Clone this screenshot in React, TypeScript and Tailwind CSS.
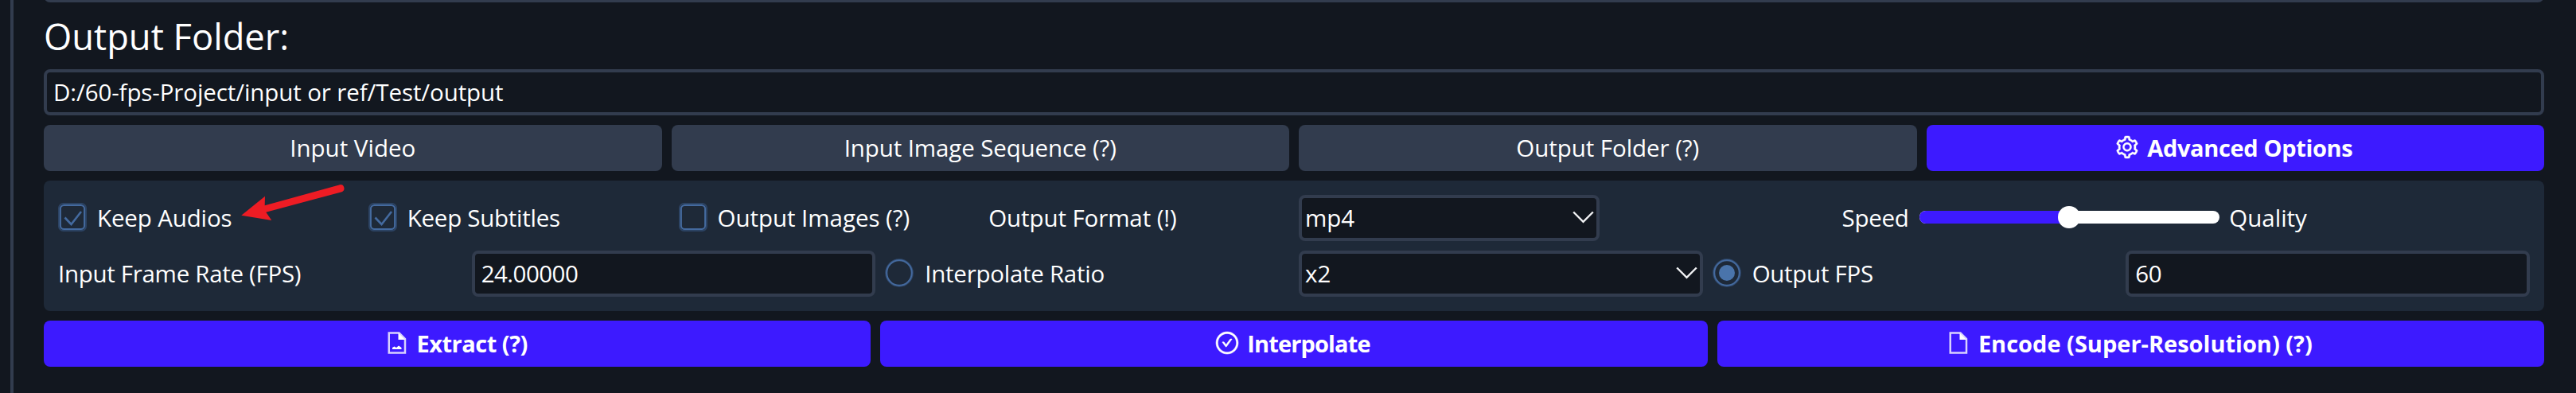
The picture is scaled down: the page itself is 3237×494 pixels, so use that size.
import type { ReactNode } from "react";
import { AiOutlineCheckCircle, AiOutlineSetting } from "react-icons/ai";

function FileIcon({ image }: { image?: boolean }) {
  return (
    <svg className="mx-1 mb-0.5 h-7 w-6 shrink-0" viewBox="0 0 24 28" fill="none">
      <path d="M1.75 1.5H14.5L22 9V26.5H1.75Z" stroke="#fff" strokeOpacity="0.8" strokeWidth="2.5" />
      <path d="M13.5 1.5V10H22Z" fill="#fff" />
      {image && <path d="M6 22V20L8.5 18.5 11 20 14 17.5 17.5 20V22Z" fill="#fff" />}
    </svg>
  );
}

function Checkbox({ label, checked, tracking }: { label: string; checked?: boolean; tracking: string }) {
  return (
    <label className="flex items-center gap-[13px]">
      <svg className="mb-0.5 size-9 shrink-0" viewBox="0 0 36 36" fill="none">
        <rect x="1" y="1" width="34" height="34" rx="5.5" stroke="#2c4363" strokeWidth="2" />
        <rect x="2.9" y="2.9" width="30.2" height="30.2" rx="4.5" stroke="#446a9f" strokeWidth="2" />
        {checked && <path d="M8.5 18.5 16.5 27 29 11" stroke="#446a9f" strokeWidth="2.6" />}
      </svg>
      <span className={tracking}>{label}</span>
    </label>
  );
}

function Radio({ label, checked, tracking }: { label: string; checked?: boolean; tracking: string }) {
  return (
    <label className="flex items-center gap-3.5">
      <svg className="mb-0.5 size-9 shrink-0" viewBox="0 0 36 36" fill="none">
        <circle cx="18" cy="18" r="16.75" stroke="#30496d" strokeWidth="2" />
        <circle cx="18" cy="18" r="15.75" stroke="#446a9f" strokeWidth="2" />
        {checked && <circle cx="18" cy="18" r="10" fill="#4a74ab" />}
      </svg>
      <span className={tracking}>{label}</span>
    </label>
  );
}

function Select({ value }: { value: string }) {
  return (
    <div className="flex h-[58px] items-center justify-between rounded-lg border-4 border-[#323c4e] bg-[#12171f] pr-[3px] pl-1">
      <span>{value}</span>
      <svg className="mb-0.5 h-4 w-[27px]" viewBox="0 0 27 16" fill="none">
        <path d="M1.2 1.5 13.5 13.8 25.8 1.5" stroke="#f1f2f4" strokeWidth="2.4" />
      </svg>
    </div>
  );
}

function TextField({ value, tracking }: { value: string; tracking: string }) {
  return (
    <div className="flex h-[58px] items-center rounded-lg border-4 border-[#323c4e] bg-[#12171f] pl-2">
      <span className={tracking}>{value}</span>
    </div>
  );
}

function Button({ primary, icon, children }: { primary?: boolean; icon?: ReactNode; children: ReactNode }) {
  return (
    <button
      className={
        primary
          ? "flex h-[58px] items-center justify-center gap-[9px] rounded-lg bg-[#3d1aff] pr-1 text-[29px] font-bold"
          : "flex h-[58px] items-center justify-center rounded-lg bg-[#323c4e]"
      }
    >
      {icon}
      {children}
    </button>
  );
}

export default function App() {
  return (
    <div className="flex h-[494px] w-[3237px] overflow-hidden bg-[#12171f] pl-[13px] font-['Open_Sans','Noto_Sans',sans-serif] text-[29.5px] leading-[40px] whitespace-nowrap text-white">
      <div className="w-1 shrink-0 bg-[#323c4e]" />
      <main className="ml-[38px] flex w-[3142px] flex-col">
        <div className="h-[3px] shrink-0 overflow-hidden">
          <div className="-mt-[55px] h-[58px] rounded-lg border-4 border-[#323c4e]" />
        </div>
        <h1 className="mt-[13px] h-[71px] text-[45.3px] leading-[60px]">Output Folder:</h1>

        <div className="flex flex-col gap-3">
          <TextField value="D:/60-fps-Project/input or ref/Test/output" tracking="tracking-[-0.1px]" />

          <div className="grid grid-cols-4 gap-3">
            <Button>Input Video</Button>
            <Button>
              <span className="tracking-[-0.12px]">Input Image Sequence (?)</span>
            </Button>
            <Button>
              <span className="tracking-[-0.05px]">Output Folder (?)</span>
            </Button>
            <Button primary icon={<AiOutlineSetting className="mb-0.5 size-8" strokeWidth={16} />}>
              <span className="tracking-[-0.35px]">Advanced Options</span>
            </Button>
          </div>

          <section className="flex flex-col gap-3 rounded-lg bg-[#1e2938] p-[18px]">
            <div className="grid h-[58px] grid-cols-8 items-center gap-3">
              <div className="relative">
                <Checkbox label="Keep Audios" checked tracking="tracking-[-0.14px]" />
                <svg
                  className="absolute -top-[24px] left-[227px] h-[50px] w-[136px]"
                  viewBox="300 230 136 50"
                  fill="#ed1c24"
                >
                  <path d="M303.3 270.7 333 246.7 332.7 258.3 427 232.2A4.7 4.7 0 0 1 429.5 241.2L334.3 266.7 341.3 277Z" />
                </svg>
              </div>
              <Checkbox label="Keep Subtitles" checked tracking="tracking-[-0.27px]" />
              <Checkbox label="Output Images (?)" tracking="tracking-[-0.04px]" />
              <span className="tracking-[-0.1px]">Output Format (!)</span>
              <Select value="mp4" />
              <span className="pr-px text-right tracking-[-0.3px]">Speed</span>
              <div className="relative mb-0.5 flex h-4 overflow-visible rounded-full bg-white">
                <div className="w-1/2 rounded-l-full bg-[#3d1aff]" />
                <div className="absolute -top-1.5 left-1/2 size-7 -translate-x-1/2 rounded-full bg-white" />
              </div>
              <span>Quality</span>
            </div>
            <div className="grid h-[58px] grid-cols-6 items-center gap-3">
              <span className="tracking-[-0.3px]">Input Frame Rate (FPS)</span>
              <TextField value="24.00000" tracking="tracking-[-0.53px]" />
              <Radio label="Interpolate Ratio" tracking="tracking-[-0.27px]" />
              <Select value="x2" />
              <Radio label="Output FPS" checked tracking="tracking-[-0.29px]" />
              <TextField value="60" tracking="tracking-[-0.53px]" />
            </div>
          </section>

          <div className="grid grid-cols-3 gap-3">
            <Button primary icon={<FileIcon image />}>
              <span className="tracking-[-0.5px]">Extract (?)</span>
            </Button>
            <Button primary icon={<AiOutlineCheckCircle className="mb-0.5 size-8" strokeWidth={16} />}>
              <span className="tracking-[-0.85px]">Interpolate</span>
            </Button>
            <Button primary icon={<FileIcon />}>
              Encode (Super-Resolution) (?)
            </Button>
          </div>
        </div>
      </main>
    </div>
  );
}
